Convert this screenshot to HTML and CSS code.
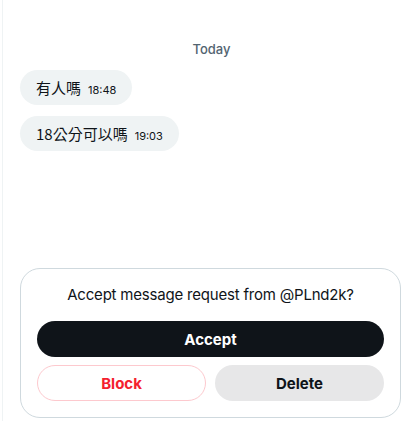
FILE: index.html
```html
<!DOCTYPE html>
<html lang="en">
<head>
    <meta charset="UTF-8">
    <meta name="viewport" content="width=device-width, initial-scale=1.0">
    <title>Message request</title>
    <link rel="stylesheet" href="styles.css">
</head>
<body>
    <div class="conversation">
        <div class="messages">
            <div class="day">Today</div>
            <div class="bubble">
                <span class="text">有人嗎</span>
                <span class="time">18:48</span>
            </div>
            <div class="bubble">
                <span class="text">18公分可以嗎</span>
                <span class="time">19:03</span>
            </div>
        </div>
        <div class="request">
            <p class="request-title">Accept message request from @PLnd2k?</p>
            <button class="btn btn-accept">Accept</button>
            <div class="request-row">
                <button class="btn btn-block">Block</button>
                <button class="btn btn-delete">Delete</button>
            </div>
        </div>
    </div>
</body>
</html>
```

FILE: styles.css
```css
body, html {
    margin: 0;
    padding: 0;
    height: 100%;
    background-color: #ffffff;
    font-family: Inter, "Noto Sans CJK TC", sans-serif;
    color: #0f1419;
    overflow: hidden;
}
.conversation {
    display: flex;
    flex-direction: column;
    height: 421px;
    margin-left: 2px;
    border-left: 1px solid #eff3f4;
    padding: 0 6px 3px 16px;
    box-sizing: border-box;
}
.messages {
    flex: 1;
    display: flex;
    flex-direction: column;
    align-items: flex-start;
    padding-top: 41px;
}
.day {
    align-self: stretch;
    text-align: center;
    font-size: 13px;
    font-weight: 500;
    color: #536471;
    line-height: 16px;
    margin-bottom: 13px;
    padding-left: 3px;
}
.bubble {
    display: flex;
    align-items: baseline;
    gap: 7px;
    background-color: #eff3f4;
    border-radius: 18px;
    padding: 8px 16px 8px 16px;
    margin-bottom: 11px;
    margin-left: 1px;
}
.bubble .text {
    font-size: 15px;
    line-height: 19px;
    font-family: "Noto Sans CJK TC", Inter, sans-serif;
}
.bubble .time {
    font-size: 11px;
    color: #0f1419;
}
.request {
    border: 1px solid #cfd9de;
    border-radius: 20px;
    padding: 16px;
    margin-left: 1px;
    display: flex;
    flex-direction: column;
    gap: 8px;
}
.request-title {
    margin: 0 0 8px;
    text-align: center;
    font-size: 15px;
    line-height: 20px;
    letter-spacing: -0.2px;
}
.request-row {
    display: flex;
    gap: 9px;
}
.btn {
    font-family: Inter, sans-serif;
    font-size: 15px;
    font-weight: 700;
    height: 36px;
    border-radius: 18px;
    border: 1px solid transparent;
    cursor: pointer;
    padding: 0 16px;
}
.btn-accept {
    width: 100%;
    background-color: #0f1419;
    color: #ffffff;
}
.btn-block {
    flex: 1;
    background-color: #ffffff;
    border-color: #fdc9ce;
    color: #f4212e;
}
.btn-delete {
    flex: 1;
    background-color: #e7e7e8;
    color: #0f1419;
}
```
